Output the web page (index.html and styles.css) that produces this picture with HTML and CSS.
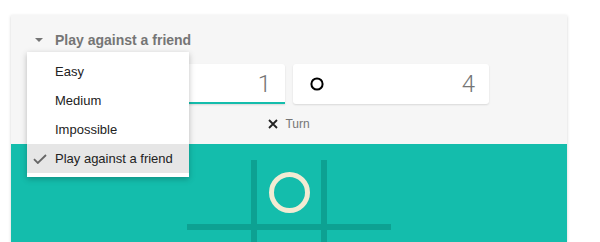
FILE: index.html
```html
<!DOCTYPE html>
<html lang="en">
<head>
    <meta charset="UTF-8">
    <title>Tic Tac Toe</title>
    <link rel="stylesheet" href="styles.css">
</head>
<body>
    <div class="card">
        <div class="mode">
            <span class="arrow"></span>
            <span class="mode-label">Play against a friend</span>
        </div>

        <div class="menu">
            <div class="menu-item">Easy</div>
            <div class="menu-item">Medium</div>
            <div class="menu-item">Impossible</div>
            <div class="menu-item selected">
                <svg class="check" width="14" height="10" viewBox="0 0 14 10">
                    <path d="M1 5.2 L4.8 9 L13 1" fill="none" stroke="#666" stroke-width="1.8"/>
                </svg>
                Play against a friend
            </div>
        </div>

        <div class="scores">
            <div class="score active">
                <svg class="mark" width="12" height="12" viewBox="0 0 12 12">
                    <path d="M1 1 L11 11 M11 1 L1 11" stroke="#000" stroke-width="2"/>
                </svg>
                <span class="points">1</span>
            </div>
            <div class="score">
                <svg class="mark" width="14" height="14" viewBox="0 0 14 14">
                    <circle cx="7" cy="7" r="5.6" fill="none" stroke="#000" stroke-width="2"/>
                </svg>
                <span class="points">4</span>
            </div>
        </div>

        <div class="turn">
            <svg width="10" height="10" viewBox="0 0 10 10">
                <path d="M1 1 L9 9 M9 1 L1 9" stroke="#222" stroke-width="1.8"/>
            </svg>
            <span>Turn</span>
        </div>

        <div class="board">
            <div class="grid">
                <div class="cell"></div>
                <div class="cell"><span class="o"></span></div>
                <div class="cell"></div>
                <div class="cell"></div>
                <div class="cell"></div>
                <div class="cell"></div>
            </div>
        </div>
    </div>
</body>
</html>
```

FILE: styles.css
```css
body, html {
    margin: 0;
    padding: 0;
    background-color: #fff;
    font-family: "Liberation Sans", Arial, sans-serif;
    overflow: hidden;
}

.card {
    position: relative;
    width: 556px;
    height: 227px;
    margin: 15px 0 0 11px;
    background-color: #f6f6f6;
    box-shadow: 0 1px 3px rgba(0, 0, 0, 0.18);
    overflow: hidden;
}

.mode {
    display: flex;
    align-items: center;
    height: 20px;
    padding: 15px 0 0 24px;
    color: #757575;
    font-size: 14px;
    font-weight: bold;
}

.arrow {
    width: 0;
    height: 0;
    border-left: 4px solid transparent;
    border-right: 4px solid transparent;
    border-top: 4px solid #757575;
    margin-right: 12px;
}

.menu {
    position: absolute;
    left: 16px;
    top: 37px;
    width: 162px;
    padding: 5px 0 4px;
    background-color: #fff;
    box-shadow: 0 2px 6px rgba(0, 0, 0, 0.25);
    z-index: 2;
}

.menu-item {
    position: relative;
    height: 29px;
    line-height: 29px;
    padding-left: 28px;
    font-size: 13px;
    color: #222;
}

.menu-item.selected {
    background-color: #e6e6e6;
}

.check {
    position: absolute;
    left: 6px;
    top: 10px;
}

.scores {
    display: flex;
    justify-content: center;
    gap: 8px;
    margin-top: 14px;
}

.score {
    display: flex;
    align-items: center;
    justify-content: space-between;
    box-sizing: border-box;
    width: 196px;
    height: 40px;
    padding: 0 14px 0 17px;
    background-color: #fff;
    border-radius: 3px;
    box-shadow: 0 1px 2px rgba(0, 0, 0, 0.12);
}

.score.active {
    border-bottom: 2px solid #14bdac;
    border-radius: 3px 3px 0 0;
    padding-top: 2px;
}

.points {
    font-family: Roboto, "Liberation Sans", sans-serif;
    font-size: 24px;
    font-weight: 300;
    color: #757575;
}

.turn {
    display: flex;
    align-items: center;
    justify-content: center;
    gap: 7px;
    height: 40px;
    font-size: 12px;
    color: #757575;
}

.board {
    height: 200px;
    padding-top: 16px;
    background-color: #14bdac;
}

.grid {
    display: grid;
    grid-template-columns: repeat(3, 64px);
    grid-auto-rows: 64px;
    gap: 6px;
    width: 204px;
    margin: 0 auto;
    background-color: #0da192;
}

.cell {
    display: flex;
    align-items: center;
    justify-content: center;
    background-color: #14bdac;
}

.o {
    box-sizing: border-box;
    width: 41px;
    height: 41px;
    border: 5px solid #f2ebd3;
    border-radius: 50%;
}
```
